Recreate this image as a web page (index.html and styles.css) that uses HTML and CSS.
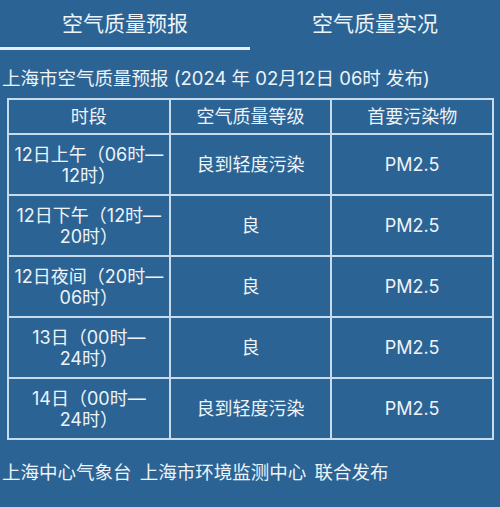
FILE: index.html
```html
<!DOCTYPE html>
<html lang="zh-CN">
<head>
<meta charset="utf-8">
<link rel="stylesheet" href="styles.css">
</head>
<body>
<div class="page">
  <div class="tabs">
    <div class="tab active">空气质量预报</div>
    <div class="tab">空气质量实况</div>
  </div>
  <div class="subtitle">上海市空气质量预报 (2024 年 02月12日 06时 发布)</div>
  <table class="grid">
    <thead>
      <tr><th>时段</th><th>空气质量等级</th><th>首要污染物</th></tr>
    </thead>
    <tbody>
      <tr><td>12日上午（06时—<br>12时）</td><td>良到轻度污染</td><td>PM2.5</td></tr>
      <tr><td>12日下午（12时—<br>20时）</td><td>良</td><td>PM2.5</td></tr>
      <tr><td>12日夜间（20时—<br>06时）</td><td>良</td><td>PM2.5</td></tr>
      <tr><td>13日（00时—<br>24时）</td><td>良</td><td>PM2.5</td></tr>
      <tr><td>14日（00时—<br>24时）</td><td>良到轻度污染</td><td>PM2.5</td></tr>
    </tbody>
  </table>
  <div class="footer">上海中心气象台 上海市环境监测中心 联合发布</div>
</div>
</body>
</html>
```
FILE: styles.css
```css
html, body {
  margin: 0;
  padding: 0;
  background: #2b6394;
}
.page {
  width: 500px;
  height: 507px;
  background: #2b6394;
  color: #eef3f8;
  font-family: Inter, "Noto Sans CJK SC", "Noto Sans", sans-serif;
  overflow: hidden;
}
.tabs {
  display: flex;
  height: 50px;
}
.tab {
  flex: 1;
  display: flex;
  align-items: center;
  justify-content: center;
  font-size: 21px;
  line-height: 28px;
  padding-bottom: 3px;
  box-sizing: border-box;
}
.tab.active {
  border-bottom: 3px solid #e6eef6;
  padding-bottom: 0;
}
.subtitle {
  margin-top: 16px;
  padding-left: 2px;
  font-size: 18.5px;
  line-height: 24px;
  white-space: nowrap;
}
.grid {
  margin: 8px 0 0 7px;
  width: 487px;
  border-collapse: collapse;
  table-layout: fixed;
  font-size: 18px;
}
.grid th, .grid td {
  border: 2px solid #c7dbee;
  text-align: center;
  vertical-align: middle;
  font-weight: normal;
  padding: 0 2px;
  line-height: 21px;
  white-space: nowrap;
}
.grid th {
  height: 33px;
}
.grid td {
  height: 59px;
}
.footer {
  margin-top: 20px;
  padding-left: 2px;
  font-size: 18.5px;
  word-spacing: 3px;
  line-height: 24px;
  white-space: nowrap;
}
```
